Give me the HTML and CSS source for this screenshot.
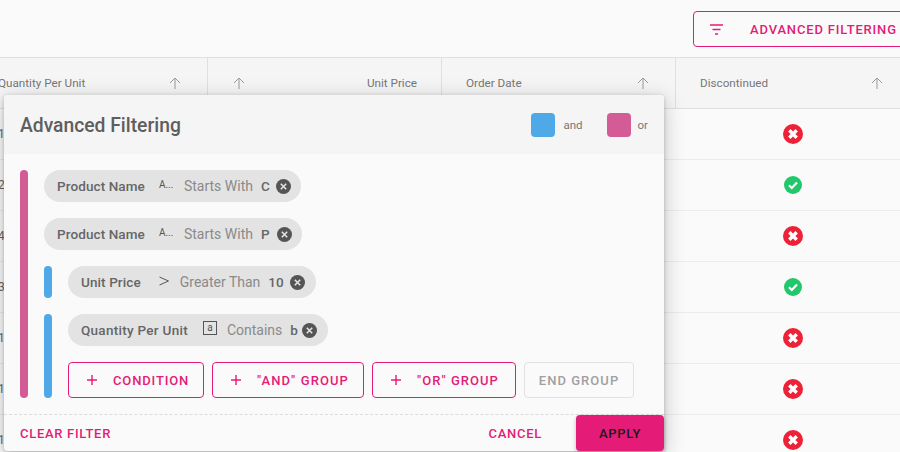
FILE: index.html
```html
<!DOCTYPE html>
<html lang="en">
<head>
<meta charset="utf-8">
<title>Advanced Filtering</title>
<link rel="stylesheet" href="styles.css">
</head>
<body>
<div class="page">
  <div class="toolbar">
    <button class="btn btn-toolbar">
      <svg class="filter-icon" width="13" height="11" viewBox="0 0 13 11"><path d="M0 1h13M2.500 5.500h8M5 10h3" stroke="#e41c77" stroke-width="1.600" fill="none"/></svg>
      <span>ADVANCED FILTERING</span>
    </button>
  </div>
  <div class="grid">
    <div class="head">
      <div class="hcell"><span>Quantity Per Unit</span><svg class="arrow" width="12" height="12" viewBox="0 0 12 12"><path d="M6 12V1M1 6l5-5 5 5" fill="none" stroke="#9a9a9a" stroke-width="1"/></svg></div>
      <div class="hcell hcell-num"><svg class="arrow" width="12" height="12" viewBox="0 0 12 12"><path d="M6 12V1M1 6l5-5 5 5" fill="none" stroke="#9a9a9a" stroke-width="1"/></svg><span>Unit Price</span></div>
      <div class="hcell"><span>Order Date</span><svg class="arrow" width="12" height="12" viewBox="0 0 12 12"><path d="M6 12V1M1 6l5-5 5 5" fill="none" stroke="#9a9a9a" stroke-width="1"/></svg></div>
      <div class="hcell"><span>Discontinued</span><svg class="arrow" width="12" height="12" viewBox="0 0 12 12"><path d="M6 12V1M1 6l5-5 5 5" fill="none" stroke="#9a9a9a" stroke-width="1"/></svg></div>
    </div>
    <div class="row"><div class="cell">10</div><div class="status"><svg class="no" viewBox="0 0 20 20"><circle cx="10" cy="10" r="10" fill="#ed2138"/><path d="M6.300 6.300l7.400 7.400M13.700 6.300l-7.400 7.400" stroke="#fff" stroke-width="3.400"/></svg></div></div>
    <div class="row"><div class="cell">24</div><div class="status"><svg class="yes" viewBox="0 0 18 18"><circle cx="9" cy="9" r="9" fill="#22c76b"/><path d="M5 9.200l2.800 2.800L13 6.500" fill="none" stroke="#fff" stroke-width="2.200"/></svg></div></div>
    <div class="row"><div class="cell">48</div><div class="status"><svg class="no" viewBox="0 0 20 20"><circle cx="10" cy="10" r="10" fill="#ed2138"/><path d="M6.300 6.300l7.400 7.400M13.700 6.300l-7.400 7.400" stroke="#fff" stroke-width="3.400"/></svg></div></div>
    <div class="row"><div class="cell">36</div><div class="status"><svg class="yes" viewBox="0 0 18 18"><circle cx="9" cy="9" r="9" fill="#22c76b"/><path d="M5 9.200l2.800 2.800L13 6.500" fill="none" stroke="#fff" stroke-width="2.200"/></svg></div></div>
    <div class="row"><div class="cell">12</div><div class="status"><svg class="no" viewBox="0 0 20 20"><circle cx="10" cy="10" r="10" fill="#ed2138"/><path d="M6.300 6.300l7.400 7.400M13.700 6.300l-7.400 7.400" stroke="#fff" stroke-width="3.400"/></svg></div></div>
    <div class="row"><div class="cell">12</div><div class="status"><svg class="no" viewBox="0 0 20 20"><circle cx="10" cy="10" r="10" fill="#ed2138"/><path d="M6.300 6.300l7.400 7.400M13.700 6.300l-7.400 7.400" stroke="#fff" stroke-width="3.400"/></svg></div></div>
    <div class="row"><div class="cell">18</div><div class="status"><svg class="no" viewBox="0 0 20 20"><circle cx="10" cy="10" r="10" fill="#ed2138"/><path d="M6.300 6.300l7.400 7.400M13.700 6.300l-7.400 7.400" stroke="#fff" stroke-width="3.400"/></svg></div></div>
  </div>

  <div class="dialog">
    <div class="dialog-head">
      <h2 class="title">Advanced Filtering</h2>
      <div class="legend">
        <span class="swatch swatch-and"></span><span class="legend-and">and</span>
        <span class="swatch swatch-or"></span><span class="legend-or">or</span>
      </div>
    </div>
    <div class="dialog-body">
      <div class="group">
        <div class="bar bar-or"></div>
        <div class="stack">
          <div class="chip chip-a">
            <span class="chip-name">Product Name</span><span class="op-a">A...</span><span class="chip-op">Starts With</span><span class="chip-val">C</span>
            <svg class="chip-x" viewBox="0 0 15 15"><circle cx="7.500" cy="7.500" r="7.500" fill="#555"/><path d="M4.800 4.800l5.400 5.400M10.200 4.800l-5.400 5.400" stroke="#e3e3e3" stroke-width="1.600"/></svg>
          </div>
          <div class="chip chip-b">
            <span class="chip-name">Product Name</span><span class="op-a">A...</span><span class="chip-op">Starts With</span><span class="chip-val">P</span>
            <svg class="chip-x" viewBox="0 0 15 15"><circle cx="7.500" cy="7.500" r="7.500" fill="#555"/><path d="M4.800 4.800l5.400 5.400M10.200 4.800l-5.400 5.400" stroke="#e3e3e3" stroke-width="1.600"/></svg>
          </div>
          <div class="group">
            <div class="bar bar-and"></div>
            <div class="stack">
              <div class="chip chip-c">
                <span class="chip-name">Unit Price</span>
                <svg class="op-gt" width="10" height="10" viewBox="0 0 10 10"><path d="M.5 1l9 4-9 4" fill="none" stroke="#555" stroke-width="1"/></svg>
                <span class="chip-op">Greater Than</span><span class="chip-val">10</span>
                <svg class="chip-x" viewBox="0 0 15 15"><circle cx="7.500" cy="7.500" r="7.500" fill="#555"/><path d="M4.800 4.800l5.400 5.400M10.200 4.800l-5.400 5.400" stroke="#e3e3e3" stroke-width="1.600"/></svg>
              </div>
            </div>
          </div>
          <div class="group">
            <div class="bar bar-and"></div>
            <div class="stack">
              <div class="chip chip-d">
                <span class="chip-name">Quantity Per Unit</span><span class="op-box">a</span><span class="chip-op">Contains</span><span class="chip-val">b</span>
                <svg class="chip-x" viewBox="0 0 15 15"><circle cx="7.500" cy="7.500" r="7.500" fill="#555"/><path d="M4.800 4.800l5.400 5.400M10.200 4.800l-5.400 5.400" stroke="#e3e3e3" stroke-width="1.600"/></svg>
              </div>
              <div class="actions">
                <button class="btn btn-cond"><svg class="plus" width="10" height="10" viewBox="0 0 10 10"><path d="M5 0v10M0 5h10" stroke="#e41c77" stroke-width="1.400"/></svg><span>CONDITION</span></button>
                <button class="btn btn-and"><svg class="plus" width="10" height="10" viewBox="0 0 10 10"><path d="M5 0v10M0 5h10" stroke="#e41c77" stroke-width="1.400"/></svg><span>"AND" GROUP</span></button>
                <button class="btn btn-or"><svg class="plus" width="10" height="10" viewBox="0 0 10 10"><path d="M5 0v10M0 5h10" stroke="#e41c77" stroke-width="1.400"/></svg><span>"OR" GROUP</span></button>
                <button class="btn btn-end">END GROUP</button>
              </div>
            </div>
          </div>
        </div>
      </div>
    </div>
    <div class="dialog-foot">
      <span class="link">CLEAR FILTER</span>
      <div class="foot-right">
        <span class="link">CANCEL</span>
        <button class="apply">APPLY</button>
      </div>
    </div>
  </div>
</div>
</body>
</html>
```
FILE: styles.css
```css
* { box-sizing: border-box; }
html, body { margin: 0; padding: 0; height: 100%; }
body { font-family: Roboto, "Liberation Sans", sans-serif; background: #fafafa; color: #666; overflow: hidden; }
.page { position: relative; width: 900px; height: 452px; overflow: hidden; }

.toolbar { height: 57px; display: flex; justify-content: flex-end; align-items: flex-start; padding-top: 11px; margin-right: -14px; }
.btn { display: flex; align-items: center; height: 36px; background: transparent; border: 1px solid #e41c77; border-radius: 4px; color: #e41c77; font-family: inherit; font-size: 13px; font-weight: 500; letter-spacing: 1.05px; padding: 0; white-space: nowrap; }
.btn-toolbar { width: 221px; padding-left: 16px; letter-spacing: .84px; }
.filter-icon { margin-right: 27px; }

.grid { width: 936px; margin-left: -26px; }
.head { display: grid; grid-template-columns: 234px 234px 234px 234px; height: 52px; background: #f5f5f5; border-top: 1px solid #e0e0e0; border-bottom: 1px solid #e0e0e0; }
.hcell { display: flex; align-items: center; justify-content: space-between; padding: 0 26px 0 24px; border-right: 1px solid #e0e0e0; font-size: 11.7px; color: #777; }
.hcell-num { padding: 0 24px 0 25px; }
.arrow { flex: none; }
.row { display: grid; grid-template-columns: 702px 234px; height: 51px; border-bottom: 1px solid #ececec; align-items: center; }
.cell { padding-left: 24px; font-size: 12px; color: #666; }
.status { display: flex; justify-content: center; }
.no { width: 20px; height: 20px; }
.yes { width: 18px; height: 18px; }

.dialog { position: absolute; left: 4px; top: 95px; width: 660px; height: 356px; background: #fafafa; border-radius: 4px; box-shadow: 0 5px 22px rgba(0,0,0,.22), 0 1px 4px rgba(0,0,0,.2); display: flex; flex-direction: column; }
.dialog-head { height: 59px; flex: none; background: #f5f5f5; border-radius: 4px 4px 0 0; display: flex; align-items: center; justify-content: space-between; padding: 2px 16px 0; }
.title { margin: 0; font-size: 19.3px; font-weight: 500; color: #5e5e5e; }
.legend { display: flex; align-items: center; font-size: 11.5px; color: #777; margin-top: -2px; }
.swatch { width: 24px; height: 24px; border-radius: 4px; margin-right: 8px; }
.swatch-and { background: #4fa9e6; }
.swatch-or { background: #d45c96; }
.legend-and { margin-right: 24px; }
.legend-or { margin-left: -1px; }

.dialog-body { padding: 16px 16px 16px; height: 261px; flex: none; border-bottom: 1px dashed #dcdcdc; }
.group { display: flex; gap: 16px; }
.stack { display: flex; flex-direction: column; gap: 16px; align-items: flex-start; }
.bar { width: 8px; flex: none; border-radius: 4px; }
.bar-or { background: #d45c96; }
.bar-and { background: #4fa9e6; }

.chip { height: 32px; border-radius: 16px; background: #e3e3e3; display: flex; align-items: center; padding: 0 10px 0 13px; font-size: 14px; white-space: nowrap; }
.chip-name { font-size: 13.5px; font-weight: 500; color: #666; letter-spacing: .1px; }
.chip-op { color: #8a8a8a; }
.chip-val { font-size: 13.5px; font-weight: 500; color: #666; margin-left: 8px; }
.chip-x { width: 15px; height: 15px; flex: none; margin-left: auto; }
.op-a { font-size: 10px; color: #555; margin: -4px 9px 0 14px; width: 16px; flex: none; }
.op-gt { flex: none; margin: -3px 11px 0 18px; }
.op-box { flex: none; width: 14px; height: 14px; border: 1px solid #555; font-size: 10px; line-height: 11px; text-align: center; color: #555; margin: -4px 10px 0 15px; }
.chip-a { width: 257px; }
.chip-b { width: 258px; }
.chip-c { width: 248px; padding-right: 11px; }
.chip-d { width: 260px; padding-right: 11px; }
.chip-d .chip-name { letter-spacing: .28px; }

.actions { display: flex; gap: 8px; }
.plus { flex: none; }
.btn-cond { width: 136px; padding-left: 18px; letter-spacing: .85px; }
.btn-cond .plus { margin-right: 16px; }
.btn-and { width: 152px; padding-left: 18px; letter-spacing: 1.1px; }
.btn-and .plus { margin-right: 16px; }
.btn-or { width: 144px; padding-left: 18px; }
.btn-or .plus { margin-right: 16px; }
.btn-end { width: 110px; justify-content: center; border-color: #e2e2e2; color: #a0a0a0; }

.dialog-foot { flex: 1; display: flex; align-items: center; justify-content: space-between; padding-left: 16px; }
.link { font-size: 13px; font-weight: 500; color: #e41c77; letter-spacing: .7px; }
.foot-right { display: flex; align-items: center; gap: 34px; height: 100%; }
.apply { width: 88px; height: 36px; border: 0; border-radius: 4px; background: #e41c77; color: #1a1a1a; font-family: inherit; font-size: 13px; font-weight: 500; letter-spacing: .7px; box-shadow: 0 2px 4px rgba(0,0,0,.25); }
```
